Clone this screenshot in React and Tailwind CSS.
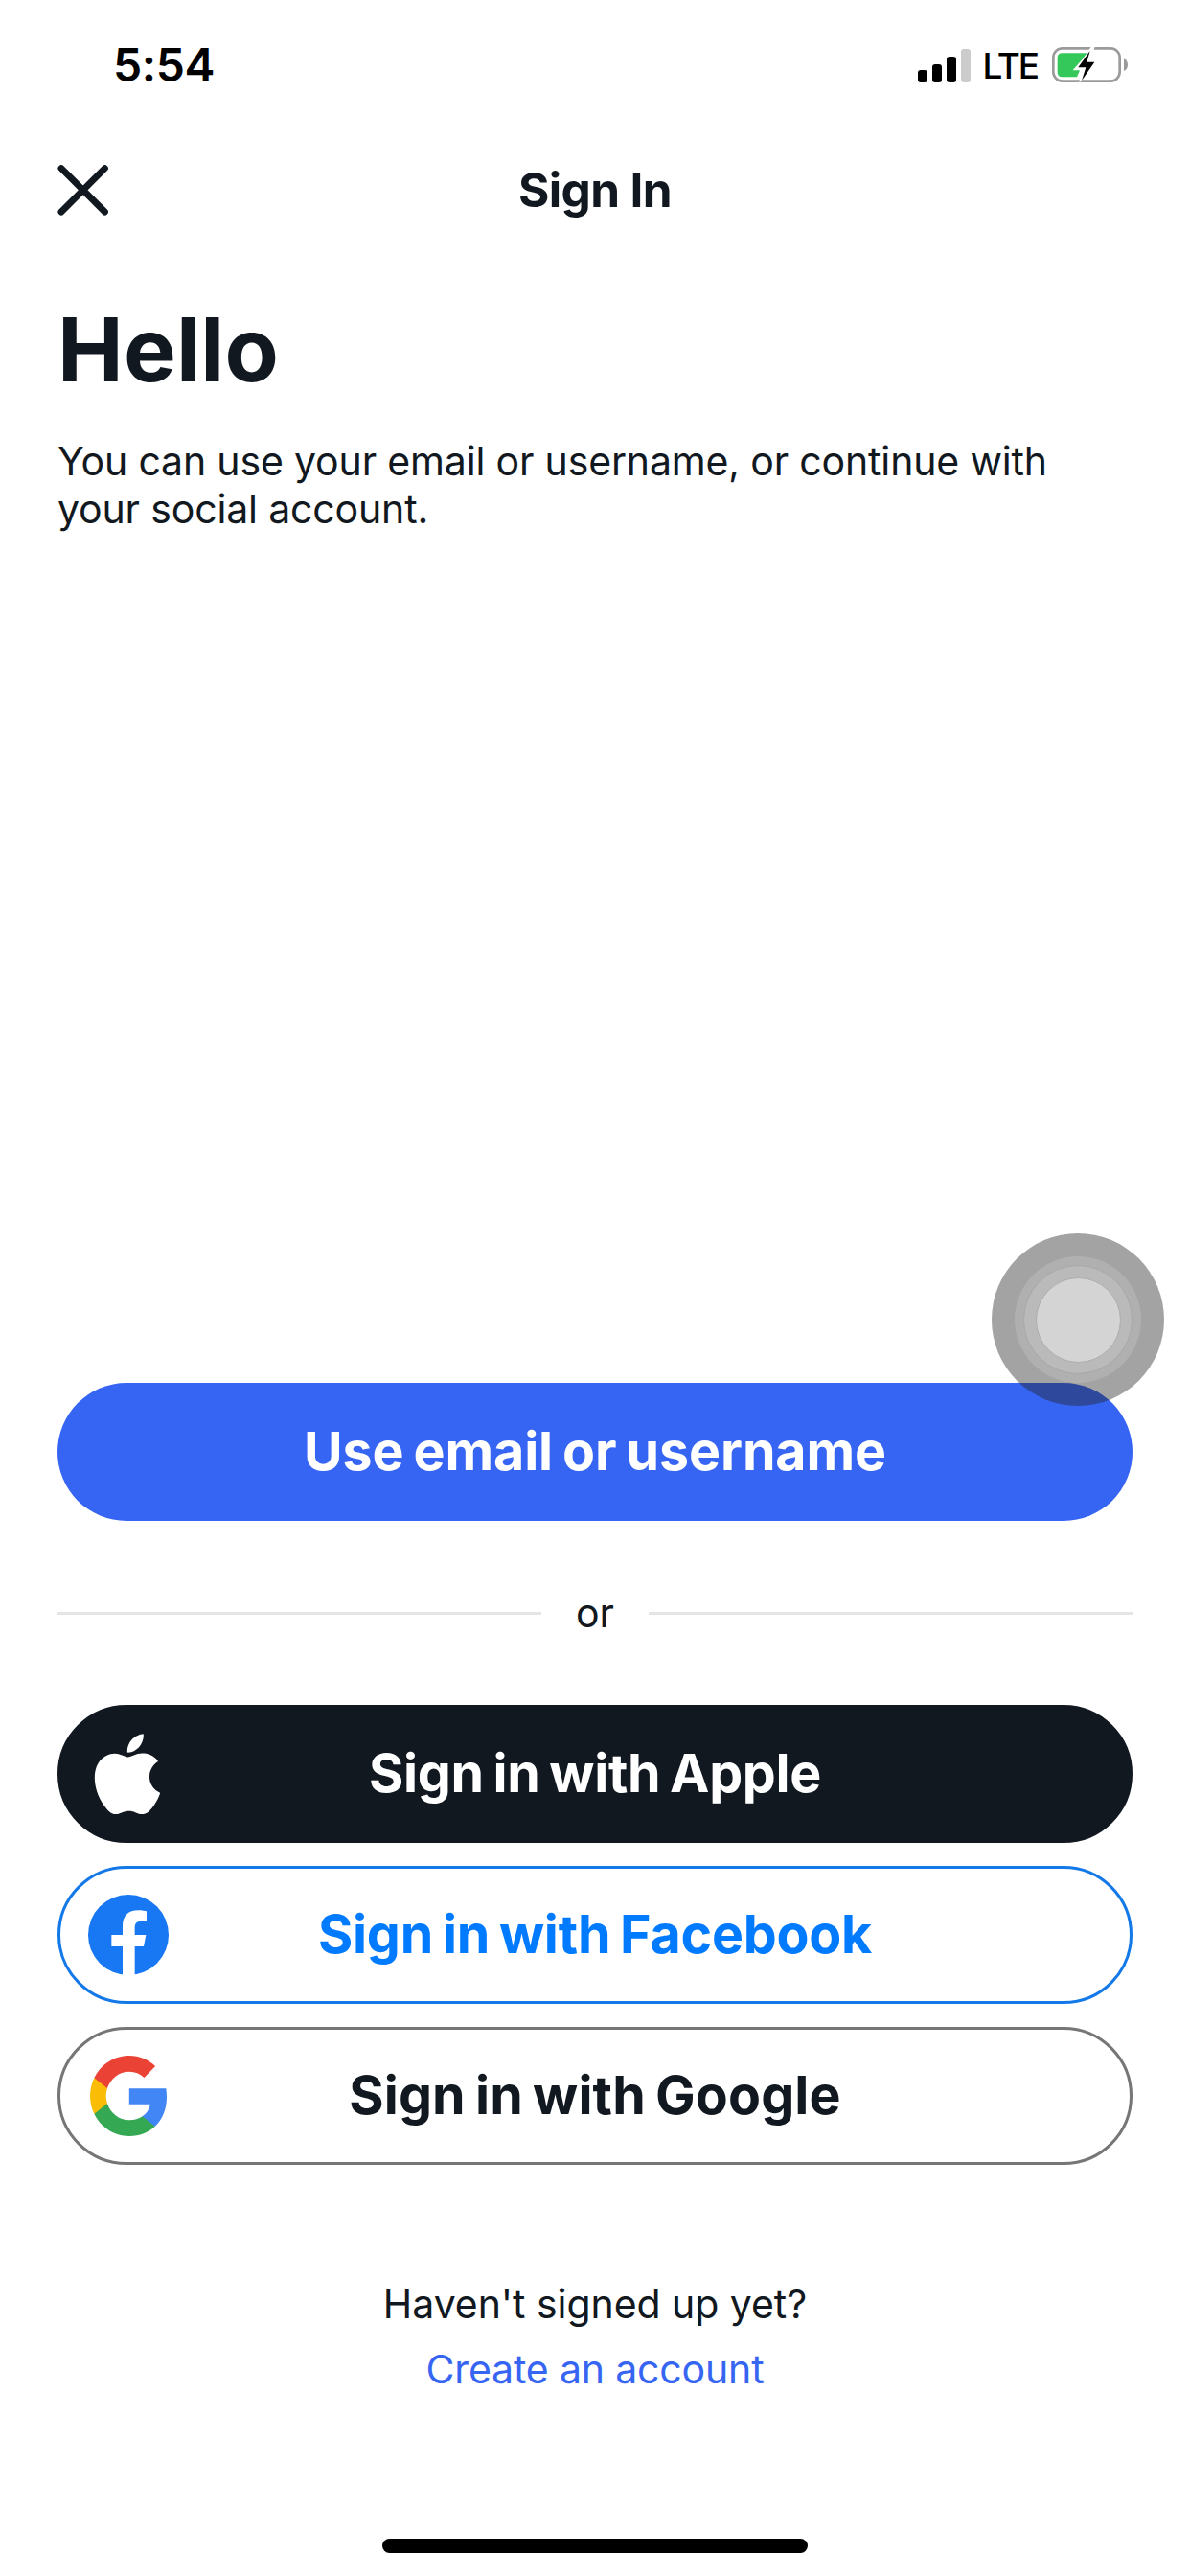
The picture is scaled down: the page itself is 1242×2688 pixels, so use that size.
import React from "react";

function SignalIcon() {
  return (
    <div className="flex h-[35px] items-end gap-[5px]">
      <span className="h-[13px] w-[10px] rounded-[3px] bg-black" />
      <span className="h-[19px] w-[10px] rounded-[3px] bg-black" />
      <span className="h-[27px] w-[10px] rounded-[3px] bg-black" />
      <span className="h-[35px] w-[10px] rounded-[3px] bg-[#cccccc]" />
    </div>
  );
}

function BatteryIcon() {
  return (
    <svg className="h-[40px] w-[80px]" viewBox="0 0 240 120" fill="none">
      <rect x="4" y="7" width="208" height="103" rx="29" stroke="#9b9b9b" strokeWidth="8" />
      <path d="M225 40c8 3 12 10 12 19s-4 16-12 19z" fill="#9b9b9b" />
      <path d="M32 22H112L65 76H87L78 97H32Q17 97 17 82V37Q17 22 32 22Z" fill="#34c759" />
      <path d="M122 2L76 72H99L84 117L145 48H118L134 2Z" fill="#fff" />
      <path d="M119 15L82 67H106L93 108L133 50H109Z" fill="#000" />
    </svg>
  );
}

function CloseIcon() {
  return (
    <svg className="size-[54px]" viewBox="0 0 54 54" fill="none" stroke="#111820" strokeWidth="7" strokeLinecap="round">
      <path d="M4 4.6L49.4 50M49.4 4.6L4 50" />
    </svg>
  );
}

function AppleLogo() {
  return (
    <svg className="mr-[2px] size-[84.5px]" viewBox="0 0 24 24" fill="#fff">
      <path d="M12.152 6.896c-.948 0-2.415-1.078-3.96-1.04-2.04.027-3.91 1.183-4.961 3.014-2.117 3.675-.546 9.103 1.519 12.09 1.013 1.454 2.208 3.09 3.792 3.039 1.52-.065 2.09-.987 3.935-.987 1.831 0 2.35.987 3.96.948 1.637-.026 2.676-1.48 3.676-2.948 1.156-1.688 1.636-3.325 1.662-3.415-.039-.013-3.182-1.221-3.22-4.857-.026-3.04 2.48-4.494 2.597-4.559-1.429-2.09-3.623-2.324-4.39-2.376-2-.156-3.675 1.09-4.61 1.09zM15.53 3.83c.843-1.012 1.4-2.427 1.245-3.83-1.207.052-2.662.805-3.532 1.818-.78.896-1.454 2.338-1.273 3.714 1.338.104 2.715-.688 3.559-1.701" />
    </svg>
  );
}

function FacebookLogo() {
  return (
    <svg className="size-[84px]" viewBox="0 0 252 252">
      <circle cx="126" cy="126" r="126" fill="#1877f2" />
      <path
        fill="#fff"
        d="M108 256V162H73V126H108V98C108 66 126 49 157 49C169 49 178 51 183 52V83H167C151 83 146 91 146 103V126H181L174 162H146V256Z"
      />
    </svg>
  );
}

function GoogleLogo() {
  return (
    <svg className="h-[84px] w-[80px]" viewBox="1 1 21.56 22" preserveAspectRatio="none">
      <path fill="#4285f4" d="M22.56 12.25c0-.78-.07-1.53-.2-2.25H12v4.26h5.92c-.26 1.37-1.04 2.53-2.21 3.31v2.77h3.57c2.08-1.92 3.28-4.74 3.28-8.09z" />
      <path fill="#34a853" d="M12 23c2.97 0 5.46-.98 7.28-2.66l-3.57-2.77c-.98.66-2.23 1.06-3.71 1.06-2.86 0-5.29-1.93-6.16-4.53H2.18v2.84C3.99 20.53 7.7 23 12 23z" />
      <path fill="#fbbc05" d="M5.84 14.09c-.22-.66-.35-1.36-.35-2.09s.13-1.43.35-2.09V7.07H2.18C1.43 8.55 1 10.22 1 12s.43 3.45 1.18 4.93l2.85-2.22.81-.62z" />
      <path fill="#ea4335" d="M12 5.38c1.62 0 3.06.56 4.21 1.64l3.15-3.15C17.45 2.09 14.97 1 12 1 7.7 1 3.99 3.47 2.18 7.07l3.66 2.84c.87-2.6 3.3-4.53 6.16-4.53z" />
    </svg>
  );
}

function SocialButton({ icon, className, children }) {
  return (
    <button
      className={`grid h-[144px] w-full grid-cols-[86px_1fr_86px] items-center rounded-full border-[3px] px-[28px] text-[55.5px] font-bold [word-spacing:-3px] ${className}`}
    >
      <span className="flex justify-center">{icon}</span>
      <span className="pb-[2px] text-center leading-[70px] whitespace-nowrap">{children}</span>
    </button>
  );
}

function AssistiveTouch() {
  return (
    <div className="absolute top-[1287px] left-[1035px] flex size-[180px] items-center justify-center rounded-full bg-[#242424]/42">
      <div className="flex size-[132px] items-center justify-center rounded-full bg-[#b0b0b0]">
        <div className="flex size-[114px] items-center justify-center rounded-full border border-[#a8a8a8] bg-[#bababa]">
          <div className="size-[89px] rounded-full border border-[#adadad] bg-[#d4d4d4]" />
        </div>
      </div>
    </div>
  );
}

export default function App() {
  return (
    <main className="relative flex h-[2688px] w-[1242px] flex-col bg-white px-[60px] font-['Inter',sans-serif] text-[#111820]">
      <div className="flex h-[136px] items-center justify-between pr-[4px] pl-[58px] text-black">
        <span className="text-[48px] leading-[60px] font-semibold tracking-[-0.4px]">5:54</span>
        <div className="flex items-center">
          <SignalIcon />
          <span className="pt-[2px] pl-[12px] text-[37px] leading-[44px] font-medium tracking-[-2.1px]">LTE</span>
          <span className="pl-[15px]">
            <BatteryIcon />
          </span>
        </div>
      </div>

      <header className="mt-[16px] grid h-[92px] grid-cols-[1fr_auto_1fr] items-center">
        <button aria-label="Close" className="justify-self-start">
          <CloseIcon />
        </button>
        <span className="text-[49.5px] leading-[60px] font-bold tracking-[-0.65px]">Sign In</span>
      </header>

      <h1 className="mt-[66px] text-[92px] leading-[110px] font-bold tracking-[0.25px]">Hello</h1>
      <p className="mt-[36px] text-[41px] leading-[50px] tracking-[-0.16px]">
        You can use your email or username, or continue with
        <br />
        your social account.
      </p>

      <button className="mt-[887px] h-[144px] rounded-full bg-[#3665f3] pb-[2px] text-[55.5px] font-bold tracking-[-0.1px] text-white [word-spacing:-3px]">
        Use email or username
      </button>

      <div className="flex h-[192px] items-center">
        <span className="mt-px h-[3px] flex-1 bg-[#e5e5e5]" />
        <span className="w-[112px] text-center text-[41px] leading-[50px]">or</span>
        <span className="mt-px h-[3px] flex-1 bg-[#e5e5e5]" />
      </div>

      <div className="flex flex-col gap-[24px]">
        <SocialButton icon={<AppleLogo />} className="border-[#111820] bg-[#111820] tracking-[-0.32px] text-white">
          Sign in with Apple
        </SocialButton>
        <SocialButton icon={<FacebookLogo />} className="border-[#1479e8] tracking-[-0.24px] text-[#007aff]">
          Sign in with Facebook
        </SocialButton>
        <SocialButton icon={<GoogleLogo />} className="border-[#767676] tracking-[0.12px]">
          Sign in with Google
        </SocialButton>
      </div>

      <div className="mt-[111px] flex flex-col items-center text-[41px] leading-[68px]">
        <span className="tracking-[-0.05px]">Haven't signed up yet?</span>
        <a className="tracking-[-0.16px] text-[#3665f3]">Create an account</a>
      </div>

      <div className="mt-[143px] h-[15px] w-[444px] self-center rounded-full bg-black" />

      <AssistiveTouch />
    </main>
  );
}
